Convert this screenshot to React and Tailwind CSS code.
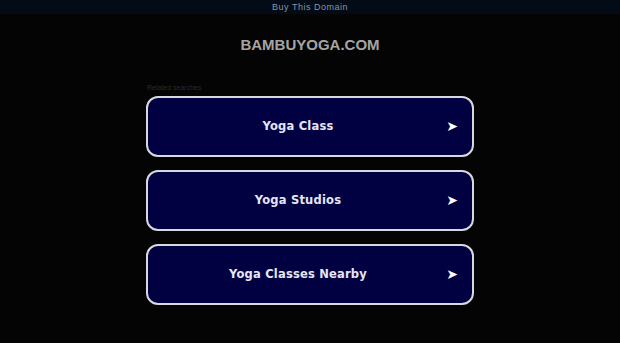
const searches = ['Yoga Class', 'Yoga Studios', 'Yoga Classes Nearby'];

export default function App() {
  return (
    <div className="min-h-[343px] bg-[#040404] font-['Liberation_Sans',Arial,sans-serif]">
      {/* Top bar */}
      <div className="h-[14px] bg-[#020b16] flex items-center justify-center">
        <span className="text-[9px] tracking-[0.5px] text-[#8a95a3] leading-none">Buy This Domain</span>
      </div>

      {/* Domain name */}
      <div className="flex justify-center pt-[23px]">
        <h1 className="text-[15px] leading-none font-bold text-[#a4a4a4]">BAMBUYOGA.COM</h1>
      </div>

      {/* Related searches */}
      <div className="w-[328px] mx-auto mt-[32px]">
        <p className="text-[7px] leading-none text-[#2a2a2a] pl-[1px]">Related searches</p>
        <div className="mt-[5px] flex flex-col gap-[13px]">
          {searches.map((s) => (
            <div
              key={s}
              className="relative h-[61px] rounded-[12px] border-2 border-[#d8d8e0] bg-[#010142] flex items-center justify-center pr-[24px]"
            >
              <span className="font-['DejaVu_Sans',Verdana,sans-serif] font-bold text-[11.5px] tracking-[0.2px] text-[#e6e6f7]">
                {s}
              </span>
              <span className="absolute right-[14px] top-1/2 -translate-y-[55%] text-[14px] leading-none text-white font-['DejaVu_Sans',sans-serif]">
                ➤
              </span>
            </div>
          ))}
        </div>
      </div>
    </div>
  );
}
